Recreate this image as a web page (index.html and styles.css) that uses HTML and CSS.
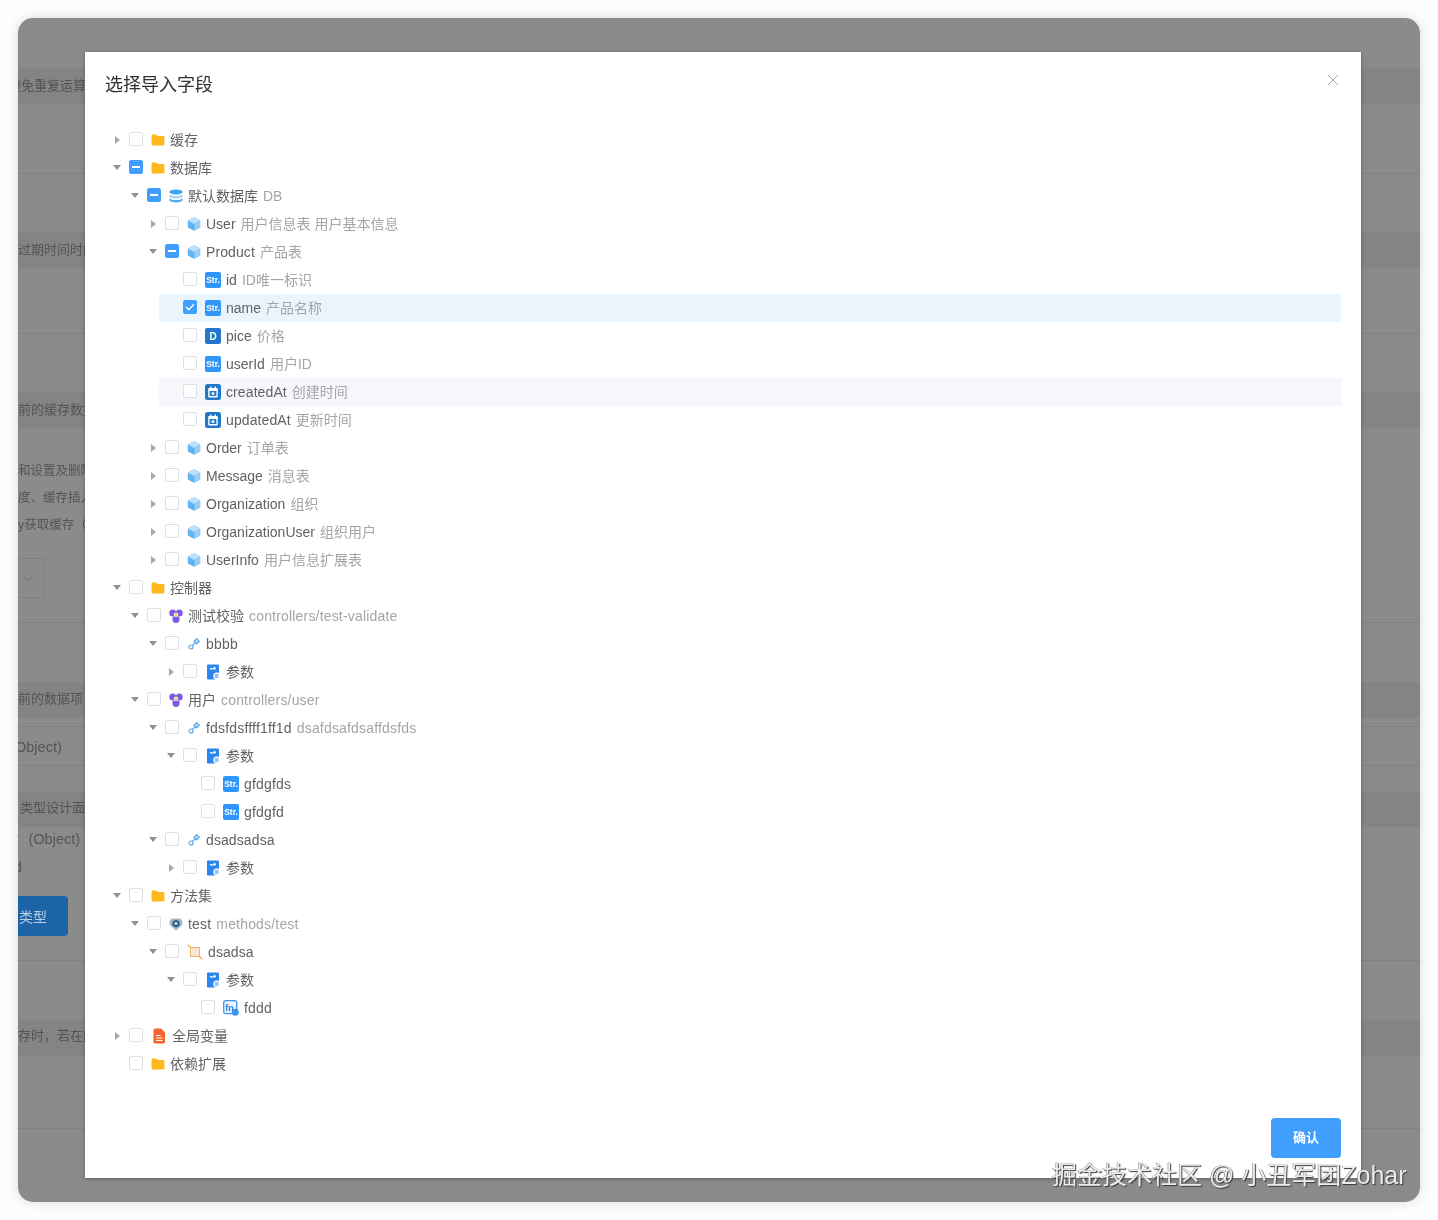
FILE: index.html
```html
<!DOCTYPE html>
<html lang="zh-CN">
<head>
<meta charset="utf-8">
<title>选择导入字段</title>
<link rel="stylesheet" href="styles.css">
</head>
<body>
<svg class="defs" aria-hidden="true">
  <symbol id="folder" viewBox="0 0 14 14"><path d="M0.6 2.400a.8.8 0 0 1 .8-.8h3.700l1.300 1.500h6.200a.8.8 0 0 1 .8.8v7.800a.8.8 0 0 1-.8.8H1.400a.8.8 0 0 1-.8-.8z" fill="#ffb91f"/></symbol>
  <symbol id="db" viewBox="0 0 14 14"><ellipse cx="7" cy="3" rx="6.600" ry="2.600" fill="#3ea3ee"/><path d="M.4 5C1.400 6.500 4.200 7 7 7s5.600-.5 6.600-2V7.600C13 9.100 10 9.700 7 9.700S1 9.100.4 7.600z" fill="#a5d5f7"/><path d="M.4 9.300C1.400 10.700 4.200 11.100 7 11.100s5.600-.4 6.600-1.800v1.800c-.4 1.600-3.600 2.400-6.600 2.400s-6.200-.8-6.600-2.400z" fill="#4dabf0"/></symbol>
  <symbol id="cube" viewBox="0 0 14 14"><path d="M7 .2 13.200 3.500V10.500L7 13.800 .8 10.500V3.500z" fill="#62b3f1"/><path d="M7 .2 13.200 3.500 7 6.900 .8 3.500z" fill="#bfe0fa"/><path d="M13.200 3.500V10.500L7.500 13.500V7.300z" fill="#98cdf7"/></symbol>
  <symbol id="cal" viewBox="0 0 16 16"><rect width="16" height="16" rx="2.500" fill="#1f78c9"/><path d="M3.200 5a1 1 0 0 1 1-1h7.600a1 1 0 0 1 1 1v7.500a1 1 0 0 1-1 1H4.200a1 1 0 0 1-1-1z" fill="#fff"/><rect x="4.600" y="7" width="6.800" height="5" fill="#1f78c9"/><path d="M5.800 2.400v2.400M10.200 2.400v2.400" stroke="#fff" stroke-width="1.400"/><circle cx="8" cy="9.500" r="1.500" fill="#fff"/></symbol>
  <symbol id="team" viewBox="0 0 14 14"><circle cx="3.700" cy="4" r="3.500" fill="#7d5be6"/><circle cx="10.300" cy="4" r="3.500" fill="#7d5be6"/><circle cx="7" cy="10.300" r="3.600" fill="#7d5be6"/><circle cx="7" cy="5.800" r="2.300" fill="#f9e9b8"/><circle cx="7" cy="5.800" r="1" fill="#f0c93a"/></symbol>
  <symbol id="link" viewBox="0 0 14 14"><g fill="none" stroke="#5aa6ec" stroke-width="1.200"><circle cx="4" cy="10" r="2"/><rect x="7.800" y="2.500" width="3.700" height="3.700" transform="rotate(45 9.650 4.350)" fill="#bcdcf8"/><path d="M5.300 8.500 8.300 5.700"/></g></symbol>
  <symbol id="param" viewBox="0 0 16 16"><path d="M2 1.500a1 1 0 0 1 1-1h10a1 1 0 0 1 1 1V11l-4 4.500H3a1 1 0 0 1-1-1z" fill="#2a86ee"/><path d="M4.800 4.800H10.500M8.800 3 10.800 4.800" stroke="#fff" stroke-width="1.200" fill="none"/><circle cx="11.800" cy="12" r="3.600" fill="#fff"/><path d="M9.800 11H13.500M9.800 13H13.500" stroke="#2a86ee" stroke-width="1.100"/></symbol>
  <symbol id="shield" viewBox="0 0 14 14"><path d="M7 13.500 1.500 8.800C.1 7.300.2 2.900 2.500 1.900 4 1.200 5.500 1.500 7 1.500s3-.3 4.500.4c2.300 1 2.400 5.400 1 6.900z" fill="#a3b5c6"/><path d="M7 2.800 10.500 4.700V8.500L7 10.400 3.500 8.500V4.700z" fill="#245a82"/><circle cx="7" cy="6.600" r="1.500" fill="#d5e6f2"/></symbol>
  <symbol id="crop" viewBox="0 0 16 16"><rect x="3.500" y="3.500" width="9" height="9" fill="#fbe6cf" stroke="#e9b77a" stroke-width="1"/><path d="M.8.800 3.500 3.500M12.500 12.500 15.200 15.200" stroke="#f3b23c" stroke-width="1.500"/></symbol>
  <symbol id="fn" viewBox="0 0 16 16"><rect x=".7" y=".7" width="13" height="13" rx="2" fill="#eaf4fe" stroke="#3f95ee" stroke-width="1.300"/><text x="2.200" y="11" class="fn-text">fn</text><circle cx="12.300" cy="12.300" r="3.500" fill="#3f95ee"/></symbol>
  <symbol id="doc" viewBox="0 0 16 16"><path d="M2.500 2a1.500 1.500 0 0 1 1.500-1.500h6l4 4V14a1.500 1.500 0 0 1-1.500 1.500H4A1.500 1.500 0 0 1 2.500 14z" fill="#f4642e"/><path d="M5 7.500h4.500M5 10h6.500M5 12.500h6.500" stroke="#fff" stroke-width="1.200"/></symbol>
</svg>

<div class="screen">
  <div class="frame">
    <div class="page">
      <section class="sec sec-a">
        <div class="band"><span class="under shift-a">避免重复运算</span></div>
      </section>
      <section class="sec sec-b">
        <div class="band"><span class="under">过期时间时间</span></div>
      </section>
      <section class="sec sec-c">
        <div class="band"><span class="under">前的缓存数据</span></div>
        <div class="lines">
          <p class="under">和设置及删除</p>
          <p class="under">度、缓存插入</p>
          <p class="under">y获取缓存（</p>
        </div>
        <div class="select"><svg class="chev" viewBox="0 0 12 8"><path d="M1 1.500 6 6.500 11 1.500" fill="none" stroke="#6f6f6f" stroke-width="1"/></svg></div>
      </section>
      <section class="sec sec-d">
        <div class="band band-data"><span class="under">前的数据项目</span></div>
        <div class="cell"><span class="under shift-o">Object)</span></div>
        <div class="band band-second"><span class="under shift-t">类型设计面板</span></div>
        <p class="under obj">：(Object)</p>
        <p class="under obj-d">d</p>
        <div class="under-btn">类型</div>
      </section>
      <section class="sec sec-e">
        <div class="band band-last"><span class="under">存时，若在内</span></div>
      </section>
    </div>

    <div class="dialog">
      <header class="dlg-head">
        <h2 class="dlg-title">选择导入字段</h2>
        <svg class="close" viewBox="0 0 12 12"><path d="M1 1 11 11M11 1 1 11" stroke="#a0a3a9" stroke-width="1" fill="none"/></svg>
      </header>
      <div class="dlg-body">
        <ul class="tree">
          <li><div class="row"><span class="exp"></span><span class="cb"></span><svg class="ic"><use href="#folder"/></svg><span class="lbl">缓存</span></div></li>
          <li><div class="row"><span class="exp open"></span><span class="cb part"></span><svg class="ic"><use href="#folder"/></svg><span class="lbl">数据库</span></div>
            <ul>
              <li><div class="row"><span class="exp open"></span><span class="cb part"></span><svg class="ic"><use href="#db"/></svg><span class="lbl">默认数据库<em>DB</em></span></div>
                <ul>
                  <li><div class="row"><span class="exp"></span><span class="cb"></span><svg class="ic"><use href="#cube"/></svg><span class="lbl">User<em>用户信息表 用户基本信息</em></span></div></li>
                  <li><div class="row"><span class="exp open"></span><span class="cb part"></span><svg class="ic"><use href="#cube"/></svg><span class="lbl slight">Product<em>产品表</em></span></div>
                    <ul>
                      <li><div class="row"><span class="exp none"></span><span class="cb"></span><span class="tag str">Str.</span><span class="lbl">id<em>ID唯一标识</em></span></div></li>
                      <li><div class="row sel"><span class="exp none"></span><span class="cb on"><svg class="tick" viewBox="0 0 10 8"><path d="M1 4 3.800 6.800 9 1.200" fill="none" stroke="#fff" stroke-width="1.300"/></svg></span><span class="tag str">Str.</span><span class="lbl">name<em>产品名称</em></span></div></li>
                      <li><div class="row"><span class="exp none"></span><span class="cb"></span><span class="tag dark">D</span><span class="lbl">pice<em>价格</em></span></div></li>
                      <li><div class="row"><span class="exp none"></span><span class="cb"></span><span class="tag str">Str.</span><span class="lbl">userId<em>用户ID</em></span></div></li>
                      <li><div class="row hov"><span class="exp none"></span><span class="cb"></span><svg class="ic big"><use href="#cal"/></svg><span class="lbl slight">createdAt<em>创建时间</em></span></div></li>
                      <li><div class="row"><span class="exp none"></span><span class="cb"></span><svg class="ic big"><use href="#cal"/></svg><span class="lbl slight">updatedAt<em>更新时间</em></span></div></li>
                    </ul>
                  </li>
                  <li><div class="row"><span class="exp"></span><span class="cb"></span><svg class="ic"><use href="#cube"/></svg><span class="lbl">Order<em>订单表</em></span></div></li>
                  <li><div class="row"><span class="exp"></span><span class="cb"></span><svg class="ic"><use href="#cube"/></svg><span class="lbl">Message<em>消息表</em></span></div></li>
                  <li><div class="row"><span class="exp"></span><span class="cb"></span><svg class="ic"><use href="#cube"/></svg><span class="lbl">Organization<em>组织</em></span></div></li>
                  <li><div class="row"><span class="exp"></span><span class="cb"></span><svg class="ic"><use href="#cube"/></svg><span class="lbl">OrganizationUser<em>组织用户</em></span></div></li>
                  <li><div class="row"><span class="exp"></span><span class="cb"></span><svg class="ic"><use href="#cube"/></svg><span class="lbl">UserInfo<em>用户信息扩展表</em></span></div></li>
                </ul>
              </li>
            </ul>
          </li>
          <li><div class="row"><span class="exp open"></span><span class="cb"></span><svg class="ic"><use href="#folder"/></svg><span class="lbl">控制器</span></div>
            <ul>
              <li><div class="row"><span class="exp open"></span><span class="cb"></span><svg class="ic"><use href="#team"/></svg><span class="lbl">测试校验<em class="en">controllers/test-validate</em></span></div>
                <ul>
                  <li><div class="row"><span class="exp open"></span><span class="cb"></span><svg class="ic"><use href="#link"/></svg><span class="lbl en">bbbb</span></div>
                    <ul>
                      <li><div class="row"><span class="exp"></span><span class="cb"></span><svg class="ic big"><use href="#param"/></svg><span class="lbl">参数</span></div></li>
                    </ul>
                  </li>
                </ul>
              </li>
              <li><div class="row"><span class="exp open"></span><span class="cb"></span><svg class="ic"><use href="#team"/></svg><span class="lbl">用户<em class="en">controllers/user</em></span></div>
                <ul>
                  <li><div class="row"><span class="exp open"></span><span class="cb"></span><svg class="ic"><use href="#link"/></svg><span class="lbl en">fdsfdsffff1ff1d<em class="en">dsafdsafdsaffdsfds</em></span></div>
                    <ul>
                      <li><div class="row"><span class="exp open"></span><span class="cb"></span><svg class="ic big"><use href="#param"/></svg><span class="lbl">参数</span></div>
                        <ul>
                          <li><div class="row"><span class="exp none"></span><span class="cb"></span><span class="tag str">Str.</span><span class="lbl en">gfdgfds</span></div></li>
                          <li><div class="row"><span class="exp none"></span><span class="cb"></span><span class="tag str">Str.</span><span class="lbl en">gfdgfd</span></div></li>
                        </ul>
                      </li>
                    </ul>
                  </li>
                  <li><div class="row"><span class="exp open"></span><span class="cb"></span><svg class="ic"><use href="#link"/></svg><span class="lbl slight">dsadsadsa</span></div>
                    <ul>
                      <li><div class="row"><span class="exp"></span><span class="cb"></span><svg class="ic big"><use href="#param"/></svg><span class="lbl">参数</span></div></li>
                    </ul>
                  </li>
                </ul>
              </li>
            </ul>
          </li>
          <li><div class="row"><span class="exp open"></span><span class="cb"></span><svg class="ic"><use href="#folder"/></svg><span class="lbl">方法集</span></div>
            <ul>
              <li><div class="row"><span class="exp open"></span><span class="cb"></span><svg class="ic"><use href="#shield"/></svg><span class="lbl en">test<em class="en">methods/test</em></span></div>
                <ul>
                  <li><div class="row"><span class="exp open"></span><span class="cb"></span><svg class="ic big"><use href="#crop"/></svg><span class="lbl slight">dsadsa</span></div>
                    <ul>
                      <li><div class="row"><span class="exp open"></span><span class="cb"></span><svg class="ic big"><use href="#param"/></svg><span class="lbl">参数</span></div>
                        <ul>
                          <li><div class="row"><span class="exp none"></span><span class="cb"></span><svg class="ic big"><use href="#fn"/></svg><span class="lbl en">fddd</span></div></li>
                        </ul>
                      </li>
                    </ul>
                  </li>
                </ul>
              </li>
            </ul>
          </li>
          <li><div class="row"><span class="exp"></span><span class="cb"></span><svg class="ic big"><use href="#doc"/></svg><span class="lbl">全局变量</span></div></li>
          <li><div class="row"><span class="exp none"></span><span class="cb"></span><svg class="ic"><use href="#folder"/></svg><span class="lbl">依赖扩展</span></div></li>
        </ul>
      </div>
      <footer class="dlg-foot"><button class="confirm">确认</button></footer>
    </div>
  </div>
  <div class="watermark">掘金技术社区 @ 小丑军团Zohar</div>
</div>
</body>
</html>
```
FILE: styles.css
```css
* { box-sizing: border-box; }
html, body { margin: 0; padding: 0; }
body {
  width: 1438px;
  height: 1220px;
  overflow: hidden;
  background: #fdfdfd;
  font-family: "Liberation Sans", "Noto Sans CJK SC", sans-serif;
  font-size: 14px;
  color: #606266;
}
.defs { position: absolute; width: 0; height: 0; }
.screen {
  position: relative;
  width: 1438px;
  height: 1220px;
  padding: 18px;
  filter: blur(0.35px);
}
.frame {
  position: relative;
  width: 1402px;
  height: 1184px;
  border-radius: 15px;
  overflow: hidden;
  background: #8b8b8b;
  box-shadow: 0 0 12px rgba(0, 0, 0, 0.14);
}

/* dimmed page below the dialog */
.page { padding-top: 50px; color: #545454; font-size: 13px; }
.page p { margin: 0; }
.sec { border-bottom: 1px solid #808080; }
.sec-a { height: 106px; margin-bottom: 58px; }
.sec-b { height: 102px; margin-bottom: 58px; }
.sec-c { height: 231px; margin-bottom: 59px; }
.sec-d { height: 279px; margin-bottom: 59px; }
.sec-e { height: 109px; }
.band {
  display: flex;
  align-items: center;
  height: 36px;
  background: #848484;
  overflow: hidden;
}
.band-data { padding-bottom: 2px; }
.band-last { padding-bottom: 4px; }
.under { white-space: nowrap; line-height: 20px; }
.shift-a { margin-left: -10px; }
.shift-o { margin-left: -3px; font-size: 14.5px; }
.shift-t { margin-left: 2px; }
.lines { padding-top: 30px; font-size: 12.5px; }
.lines p { height: 27px; line-height: 27px; }
.select {
  display: flex;
  align-items: center;
  justify-content: flex-end;
  width: 27px;
  height: 40px;
  margin-top: 19px;
  padding-right: 11px;
  border: 1px solid #7f7f7f;
  border-left: 0;
  border-radius: 0 4px 4px 0;
}
.chev { width: 11px; height: 7px; }
.cell {
  display: flex;
  align-items: center;
  height: 40px;
  margin-top: 8px;
  padding-top: 2px;
  border-top: 1px solid #808080;
  border-bottom: 1px solid #808080;
}
.band-second { margin-top: 26px; height: 35px; padding-bottom: 4px; }
.page .obj { height: 24px; margin-left: -4px; font-size: 14.5px; line-height: 24px; }
.page .obj-d { height: 32px; margin-left: -4px; font-size: 14px; line-height: 32px; }
.under-btn {
  display: flex;
  align-items: center;
  justify-content: flex-end;
  width: 50px;
  height: 40px;
  margin-top: 13px;
  padding-right: 21px;
  border-radius: 0 4px 4px 0;
  background: #1c64a6;
  color: #b9cfe4;
  font-size: 14px;
}

/* dialog */
.dialog {
  position: absolute;
  left: 67px;
  top: 34px;
  display: flex;
  flex-direction: column;
  width: 1276px;
  height: 1126px;
  background: #fff;
  box-shadow: 0 1px 4px rgba(0, 0, 0, 0.3);
}
.dlg-head {
  position: relative;
  padding: 21px 20px 29px;
}
.dlg-title {
  margin: 0;
  font-size: 18px;
  font-weight: 400;
  line-height: 24px;
  color: #303133;
}
.close {
  position: absolute;
  top: 22px;
  right: 22px;
  width: 12px;
  height: 12px;
}
.dlg-body { flex: 1; padding: 0 20px; }
.dlg-foot {
  display: flex;
  justify-content: flex-end;
  padding: 0 20px 20px;
}
.confirm {
  width: 70px;
  height: 40px;
  padding: 0 0 1px;
  border: 0;
  border-radius: 4px;
  background: #409eff;
  color: #fff;
  font-family: inherit;
  font-size: 13px;
  font-weight: 700;
  line-height: 18px;
}

/* tree */
.tree, .tree ul { list-style: none; margin: 0; padding: 0; }
.tree ul { padding-left: 18px; }
.row {
  display: flex;
  align-items: center;
  height: 28px;
}
.row.sel { background: #eaf4fd; }
.row.hov { background: #f5f7fa; }
.exp {
  display: flex;
  align-items: center;
  justify-content: center;
  flex: none;
  width: 24px;
  height: 28px;
  padding-bottom: 1px;
}
.exp::before {
  content: "";
  width: 0;
  height: 0;
  border-top: 4px solid transparent;
  border-bottom: 4px solid transparent;
  border-left: 5px solid #a6a9ad;
}
.exp.open::before {
  border-left: 4px solid transparent;
  border-right: 4px solid transparent;
  border-top: 5px solid #8e9094;
  border-bottom: 0;
}
.exp.none::before { display: none; }
.cb {
  display: flex;
  align-items: center;
  justify-content: center;
  flex: none;
  width: 14px;
  height: 14px;
  margin: 0 8px 2px 0;
  border: 1px solid #dcdfe6;
  border-radius: 2px;
  background: #fff;
}
.cb.on, .cb.part { border-color: #409eff; background: #409eff; }
.cb.part::before { content: ""; width: 8px; height: 2px; background: #fff; }
.tick { width: 10px; height: 8px; }
.ic { flex: none; width: 14px; height: 14px; margin-right: 5px; }
.ic.big { width: 16px; height: 16px; }
.fn-text { font: 700 9px "Liberation Sans", sans-serif; fill: #2a7fe0; }
.tag {
  display: flex;
  align-items: center;
  justify-content: center;
  flex: none;
  width: 16px;
  height: 16px;
  margin-right: 5px;
  border-radius: 2px;
  color: #fff;
  font-weight: 700;
}
.tag.str { background: #2f96fb; font-size: 8.4px; }
.tag.dark { background: #1f78c9; font-size: 10px; }
.lbl { white-space: nowrap; line-height: 20px; }
.lbl em { margin-left: 5px; font-style: normal; color: #a3a5a9; letter-spacing: 0; }
.lbl.slight { letter-spacing: 0.1px; }
.lbl.en, .lbl em.en { letter-spacing: 0.18px; }

.watermark {
  position: absolute;
  left: 1052px;
  top: 1160px;
  font-size: 25px;
  line-height: 30px;
  white-space: nowrap;
  color: #ececec;
  text-shadow: 1px 1px 1px #3a3a3a, -0.5px -0.5px 0.5px #777;
}
```
